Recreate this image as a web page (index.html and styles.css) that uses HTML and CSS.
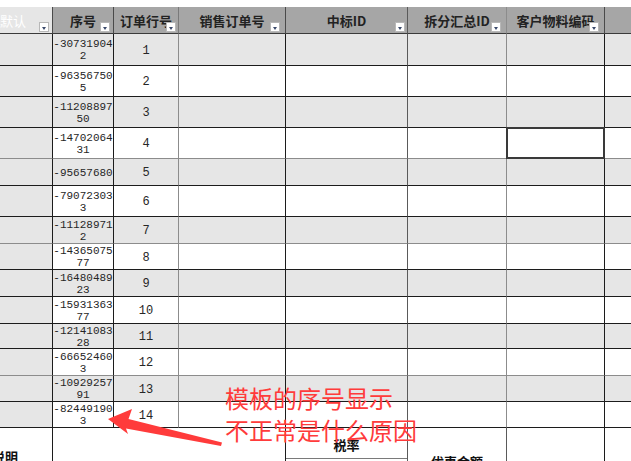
FILE: index.html
```html
<!DOCTYPE html>
<html lang="zh">
<head>
<meta charset="utf-8">
<link rel="stylesheet" href="styles.css">
</head>
<body>
<div class="sheet">
  <div class="row hdr">
    <div class="hc first"><span class="clip">默认</span><i class="dd"></i></div>
    <div class="hc"><span>序号</span><i class="dd d3"></i></div>
    <div class="hc"><span>订单行号</span><i class="dd d2"></i></div>
    <div class="hc"><span>销售订单号</span><i class="dd d5"></i></div>
    <div class="hc"><span>中标ID</span><i class="dd d2"></i></div>
    <div class="hc"><span>拆分汇总ID</span><i class="dd d5"></i></div>
    <div class="hc"><span>客户物料编码</span><i class="dd d5"></i></div>
    <div class="hc"></div>
  </div>
  <div class="row g h32"><div></div><div class="sn">-307319042</div><div class="ln">1</div><div></div><div></div><div></div><div></div><div></div></div>
  <div class="row h31"><div></div><div class="sn">-963567505</div><div class="ln">2</div><div></div><div></div><div></div><div></div><div></div></div>
  <div class="row g h31"><div></div><div class="sn">-1120889750</div><div class="ln">3</div><div></div><div></div><div></div><div></div><div></div></div>
  <div class="row h31 lg"><div></div><div class="sn">-1470206431</div><div class="ln">4</div><div></div><div></div><div></div><div class="sel"></div><div></div></div>
  <div class="row g h27"><div></div><div class="sn">-95657680</div><div class="ln">5</div><div></div><div></div><div></div><div></div><div></div></div>
  <div class="row h31"><div></div><div class="sn">-790723033</div><div class="ln">6</div><div></div><div></div><div></div><div></div><div></div></div>
  <div class="row g h27 lg"><div></div><div class="sn">-111289712</div><div class="ln">7</div><div></div><div></div><div></div><div></div><div></div></div>
  <div class="row h26"><div></div><div class="sn">-1436507577</div><div class="ln">8</div><div></div><div></div><div></div><div></div><div></div></div>
  <div class="row g h27"><div></div><div class="sn">-1648048923</div><div class="ln">9</div><div></div><div></div><div></div><div></div><div></div></div>
  <div class="row h27"><div></div><div class="sn">-1593136377</div><div class="ln">10</div><div></div><div></div><div></div><div></div><div></div></div>
  <div class="row g h25"><div></div><div class="sn">-1214108328</div><div class="ln">11</div><div></div><div></div><div></div><div></div><div></div></div>
  <div class="row h27 lg"><div></div><div class="sn">-666524603</div><div class="ln">12</div><div></div><div></div><div></div><div></div><div></div></div>
  <div class="row g h26"><div></div><div class="sn">-1092925791</div><div class="ln">13</div><div></div><div></div><div></div><div></div><div></div></div>
  <div class="row h26"><div></div><div class="sn">-824491903</div><div class="ln">14</div><div></div><div></div><div></div><div></div><div></div></div>
  <div class="foot">
    <div class="fc note-cell"><span class="shuoming">说明</span></div>
    <div class="fc"></div>
    <div class="fc stack"><div class="tax">税率</div><div></div></div>
    <div class="fc disc"><span>优惠金额</span></div>
    <div class="fc"></div>
    <div class="fc last"></div>
  </div>

  <div class="remark">模板的序号显示<br>不正常是什么原因</div>
  <svg class="arrow" width="631" height="461" viewBox="0 0 631 461">
    <polygon points="108,419 132,409 128.5,419 222,442.5 221,446 126,428.5 128,434" fill="#ff3b3b"/>
  </svg>
</div>
</body>
</html>
```
FILE: styles.css
```css
html, body {
  margin: 0;
  padding: 0;
  background: #ffffff;
  overflow: hidden;
}

.sheet {
  position: relative;
  width: 631px;
  height: 461px;
  overflow: hidden;
  padding-top: 7px;
  box-sizing: border-box;
  font-family: "Noto Sans CJK SC", "Liberation Sans", sans-serif;
}

.row {
  display: grid;
  grid-template-columns: 53px 61px 65px 107px 122px 99px 98px 60px;
}

.row > div {
  box-sizing: border-box;
  position: relative;
  overflow: hidden;
  border-right: 1px solid #1c1c1c;
  border-bottom: 1px solid #1c1c1c;
  background: #ffffff;
}

.row > div:first-child,
.row.g > div {
  background: #e6e6e6;
}

.row > div:nth-child(3) { border-right-color: #8c8c8c; }
.row > div:nth-child(5) { border-right-color: #5a5a5a; }
.row > div:nth-child(6) { border-right-color: #8c8c8c; }

.row.lg > div { border-bottom-color: #8c8c8c; }

.h32 { height: 32px; }
.h31 { height: 31px; }
.h27 { height: 27px; }
.h26 { height: 26px; }
.h25 { height: 25px; }

.hdr { height: 27px; }
.hdr > div {
  background: #a6a6a6;
  border-right-color: #4a4a4a;
  border-bottom-color: #3a3a3a;
  display: flex;
  align-items: center;
  justify-content: center;
  font-size: 13px;
  font-weight: bold;
  color: #222222;
  white-space: nowrap;
}
.hdr > div:nth-child(3) { border-right-color: #7a7a7a; }
.hdr > div.first {
  justify-content: flex-start;
  color: #ffffff;
}
.hdr .clip { margin-left: 0; font-size: 13px; font-weight: normal; }

.dd {
  position: absolute;
  right: 3px;
  bottom: 1px;
  width: 10px;
  height: 10px;
  box-sizing: border-box;
  background: #ffffff;
  border: 1px solid #b8b8b8;
}
.dd::after {
  content: "";
  position: absolute;
  left: 2px;
  top: 4px;
  border-left: 2.5px solid transparent;
  border-right: 2.5px solid transparent;
  border-top: 3px solid #3b4a6b;
}
.dd.d2 { right: 2px; }
.dd.d3 { right: 3px; }
.dd.d5 { right: 5px; }

.sn {
  display: flex;
  align-items: center;
  justify-content: center;
  text-align: center;
  word-break: break-all;
  font-family: "Liberation Mono", monospace;
  font-size: 11px;
  line-height: 12px;
  color: #262626;
  padding: 1px 0 0;
}

.ln {
  display: flex;
  align-items: center;
  justify-content: center;
  font-family: "Liberation Mono", monospace;
  font-size: 12px;
  color: #262626;
  padding-top: 2px;
}

.row > div.sel {
  border: 2px solid #3a3a3a;
  margin: -1px 0 0 -1px;
  width: calc(100% + 1px);
  height: calc(100% + 1px);
}

.foot {
  display: grid;
  grid-template-columns: 53px 233px 122px 99px 98px 60px;
  height: 80px;
}
.fc {
  box-sizing: border-box;
  border-right: 1px solid #1c1c1c;
  position: relative;
  overflow: hidden;
}
.fc.last { border-right: none; }
.fc:nth-child(3) { border-right-color: #5a5a5a; }
.fc:nth-child(4) { border-right-color: #5a5a5a; }

.note-cell { padding-top: 19px; }
.shuoming {
  display: block;
  margin-left: -8px;
  font-size: 13px;
  font-weight: bold;
  color: #111;
  white-space: nowrap;
}

.stack { display: flex; flex-direction: column; }
.tax {
  height: 31px;
  box-sizing: border-box;
  border-bottom: 1px solid #7a7a7a;
  display: flex;
  align-items: center;
  justify-content: center;
  font-size: 13px;
  font-weight: bold;
  color: #111;
  padding-top: 2px;
}

.disc {
  display: flex;
  justify-content: center;
  padding-top: 24px;
  font-size: 13px;
  font-weight: bold;
  color: #111;
}

.remark {
  position: absolute;
  left: 225px;
  top: 382px;
  font-size: 24px;
  line-height: 32px;
  color: #ff3b3b;
  white-space: nowrap;
}

.arrow {
  position: absolute;
  left: 0;
  top: 0;
}
```
